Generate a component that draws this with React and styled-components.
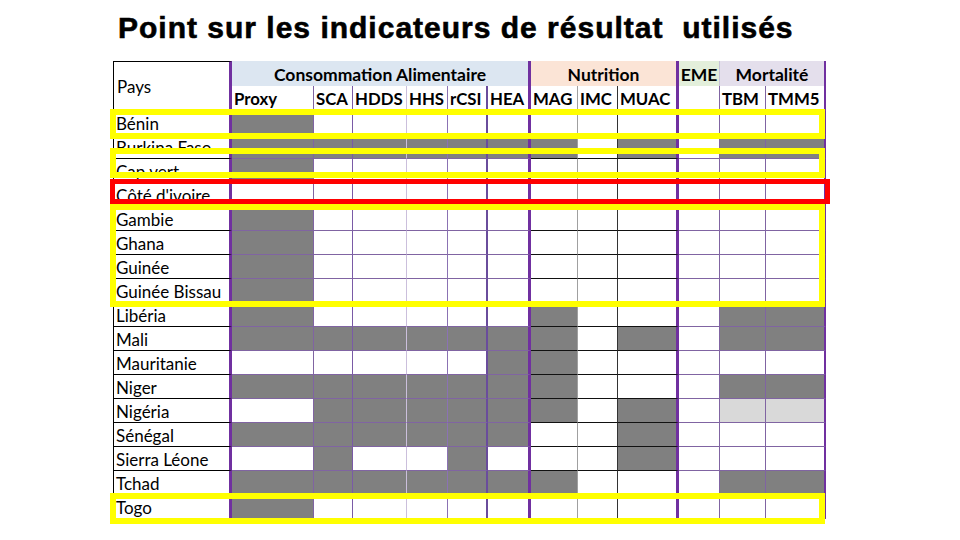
import React from "react";
import styled, { createGlobalStyle } from "styled-components";

const Global = createGlobalStyle`
  html, body { margin: 0; padding: 0; background: #ffffff; }
  #root { width: 960px; height: 540px; overflow: hidden; }
`;

const Slide = styled.div`
  width: 960px;
  height: 540px;
  background: #ffffff;
  display: flex;
  flex-direction: column;
  align-items: flex-start;
`;

const Title = styled.h1`
  margin: 11px 0 0 118px;
  font-family: "Liberation Sans", Arial, sans-serif;
  font-weight: 700;
  font-size: 30px;
  letter-spacing: 1px;
  line-height: 34px;
  color: #000;
  white-space: pre;
  -webkit-text-stroke: 0.6px #000;
`;

const TableWrap = styled.div`
  position: relative;
  margin: 16px 0 0 113px;
`;

const Grid = styled.div`
  display: grid;
  grid-template-columns: ${(p) => p.$cols};
  grid-template-rows: 25px 25px repeat(17, 24px);
  border-left: 1px solid #000;
  font-family: Lato, "Open Sans", sans-serif;
  color: #000;
`;

const PaysHead = styled.div`
  grid-row: 1 / span 2;
  border-top: 1px solid #000;
  border-right: 3px solid #7030a0;
  border-bottom: 1px solid #000;
  font-size: 17px;
  display: flex;
  align-items: center;
  padding-left: 3px;
`;

const GroupHead = styled.div`
  grid-column: span ${(p) => p.$span};
  background: ${(p) => p.$bg};
  border-right: ${(p) => p.$rb};
  font-size: 17.5px;
  font-weight: 700;
  display: flex;
  align-items: center;
  justify-content: center;
  padding-top: 1px;
  box-sizing: border-box;
  white-space: nowrap;
`;

const SubHead = styled.div`
  border-right: ${(p) => p.$rb};
  border-bottom: 1px solid ${(p) => p.$bb};
  font-size: 16.8px;
  font-weight: 700;
  display: flex;
  align-items: center;
  padding-left: 2px;
  white-space: nowrap;
  overflow: hidden;
`;

const Country = styled.div`
  border-right: 3px solid #7030a0;
  border-bottom: 1px solid #000;
  font-size: 17px;
  display: flex;
  align-items: center;
  padding: 2px 0 0 2px;
  white-space: nowrap;
  overflow: hidden;
`;

const Cell = styled.div`
  background: ${(p) => (p.$fill === "g" ? "#808080" : p.$fill === "l" ? "#d9d9d9" : "#ffffff")};
  border-right: ${(p) => p.$rb};
  border-bottom: 1px solid ${(p) => p.$bb};
`;

const Highlight = styled.div`
  position: absolute;
  box-sizing: border-box;
  border: ${(p) => p.$w}px solid ${(p) => p.$color};
  pointer-events: none;
`;

const PURPLE = "#8064a2";
const THICK = "3px solid #7030a0";

const columns = [
  { name: "Proxy", w: 82, rb: `1px solid ${PURPLE}`, bb: PURPLE },
  { name: "SCA", w: 39, rb: "1px solid #7a5aa6", bb: PURPLE },
  { name: "HDDS", w: 54, rb: "1px solid #cbbfdc", bb: PURPLE },
  { name: "HHS", w: 41, rb: "1px solid #8b72b3", bb: PURPLE },
  { name: "rCSI", w: 40, rb: "2px solid #6a4c9c", bb: PURPLE },
  { name: "HEA", w: 43, rb: THICK, bb: PURPLE },
  { name: "MAG", w: 47, rb: "1px solid #a0a0a0", bb: "#111" },
  { name: "IMC", w: 40, rb: "1px solid #333", bb: "#111" },
  { name: "MUAC", w: 61, rb: THICK, bb: "#111" },
  { name: "", w: 41, rb: `1px solid ${PURPLE}`, bb: PURPLE },
  { name: "TBM", w: 46, rb: `1px solid ${PURPLE}`, bb: PURPLE },
  { name: "TMM5", w: 60, rb: "2px solid #7030a0", bb: PURPLE },
];

const groups = [
  { label: "Consommation Alimentaire", span: 6, bg: "#dce6f1", rb: THICK },
  { label: "Nutrition", span: 3, bg: "#fbe4d6", rb: THICK },
  { label: "EME", span: 1, bg: "#e3efdb", rb: "1px solid #c6c3d8" },
  { label: "Mortalité", span: 2, bg: "#e4dfec", rb: "2px solid #7030a0" },
];

const rows = [
  ["Bénin", "g..........."],
  ["Burkina Faso", "ggggggg.g.gg"],
  ["Cap vert", "g..........."],
  ["Côté d'ivoire", "............"],
  ["Gambie", "g..........."],
  ["Ghana", "g..........."],
  ["Guinée", "g..........."],
  ["Guinée Bissau", "g..........."],
  ["Libéria", "g.....g...gg"],
  ["Mali", "ggggggg.g.gg"],
  ["Mauritanie", ".....gg....."],
  ["Niger", "ggggggg...gg"],
  ["Nigéria", ".gggggg.g.ll"],
  ["Sénégal", "gggggg..g..."],
  ["Sierra Léone", ".g..g...g..."],
  ["Tchad", "ggggggg...gg"],
  ["Togo", "g..........."],
];

const highlights = [
  { left: -3, top: 48, width: 715, height: 30, color: "#ffff00", w: 6 },
  { left: -3, top: 87, width: 715, height: 30, color: "#ffff00", w: 6 },
  { left: -3, top: 118, width: 720, height: 25, color: "#ff0000", w: 5 },
  { left: -3, top: 143, width: 715, height: 103, color: "#ffff00", w: 6 },
  { left: -3, top: 432, width: 715, height: 31, color: "#ffff00", w: 6 },
];

export default function App() {
  const cols = ["118px", ...columns.map((c) => `${c.w}px`)].join(" ");
  return (
    <>
      <Global />
      <Slide>
        <Title>{"Point sur les indicateurs de résultat  utilisés"}</Title>
        <TableWrap>
          <Grid $cols={cols}>
            <PaysHead>Pays</PaysHead>
            {groups.map((g) => (
              <GroupHead key={g.label} $span={g.span} $bg={g.bg} $rb={g.rb}>
                {g.label}
              </GroupHead>
            ))}
            {columns.map((c, i) => (
              <SubHead key={i} $rb={c.rb} $bb={c.bb}>
                {c.name}
              </SubHead>
            ))}
            {rows.map(([name, fills]) => (
              <React.Fragment key={name}>
                <Country>{name}</Country>
                {columns.map((c, i) => (
                  <Cell key={i} $fill={fills[i]} $rb={c.rb} $bb={c.bb} />
                ))}
              </React.Fragment>
            ))}
          </Grid>
          {highlights.map((h, i) => (
            <Highlight
              key={i}
              $color={h.color}
              $w={h.w}
              style={{ left: h.left, top: h.top, width: h.width, height: h.height }}
            />
          ))}
        </TableWrap>
      </Slide>
    </>
  );
}
